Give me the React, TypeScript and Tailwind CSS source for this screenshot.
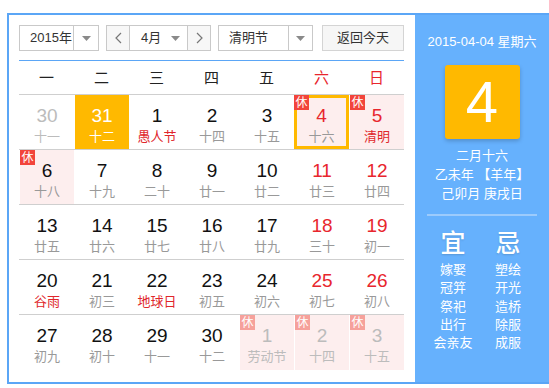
import React from "react";

type Cell = {
  d: number;
  l: string;
  other?: boolean;
  red?: boolean;
  lred?: boolean;
  rest?: boolean;
  sel?: boolean;
  today?: boolean;
};

const ROWS: Cell[][] = [
  [
    { d: 30, l: "十一", other: true },
    { d: 31, l: "十二", sel: true },
    { d: 1, l: "愚人节", lred: true },
    { d: 2, l: "十四" },
    { d: 3, l: "十五" },
    { d: 4, l: "十六", red: true, rest: true, today: true },
    { d: 5, l: "清明", red: true, lred: true, rest: true },
  ],
  [
    { d: 6, l: "十八", rest: true },
    { d: 7, l: "十九" },
    { d: 8, l: "二十" },
    { d: 9, l: "廿一" },
    { d: 10, l: "廿二" },
    { d: 11, l: "廿三", red: true },
    { d: 12, l: "廿四", red: true },
  ],
  [
    { d: 13, l: "廿五" },
    { d: 14, l: "廿六" },
    { d: 15, l: "廿七" },
    { d: 16, l: "廿八" },
    { d: 17, l: "廿九" },
    { d: 18, l: "三十", red: true },
    { d: 19, l: "初一", red: true },
  ],
  [
    { d: 20, l: "谷雨", lred: true },
    { d: 21, l: "初三" },
    { d: 22, l: "地球日", lred: true },
    { d: 23, l: "初五" },
    { d: 24, l: "初六" },
    { d: 25, l: "初七", red: true },
    { d: 26, l: "初八", red: true },
  ],
  [
    { d: 27, l: "初九" },
    { d: 28, l: "初十" },
    { d: 29, l: "十一" },
    { d: 30, l: "十二" },
    { d: 1, l: "劳动节", other: true, rest: true },
    { d: 2, l: "十四", other: true, rest: true },
    { d: 3, l: "十五", other: true, rest: true },
  ],
];

const WEEK = ["一", "二", "三", "四", "五", "六", "日"];
const YI = ["嫁娶", "冠笄", "祭祀", "出行", "会亲友"];
const JI = ["塑绘", "开光", "造桥", "除服", "成服"];

const FONT = "font-['Liberation_Sans','Noto_Sans_CJK_SC',sans-serif]";

function Caret() {
  return (
    <svg width="9" height="5" viewBox="0 0 9 5">
      <path d="M0 0h9L4.5 5z" fill="#8a8a8a" />
    </svg>
  );
}

function Chevron({ right }: { right?: boolean }) {
  return (
    <svg width="7" height="12" viewBox="0 0 7 12">
      <polyline
        points={right ? "1,1 6,6 1,11" : "6,1 1,6 6,11"}
        fill="none"
        stroke="#777"
        strokeWidth="1.2"
      />
    </svg>
  );
}

function DayCell({ c }: { c: Cell }) {
  let bg = "bg-white";
  if (c.sel) bg = "bg-[#ffb900]";
  else if (c.rest) bg = "bg-[#fdeeee]";

  let num = "text-[#111]";
  if (c.sel) num = "text-white";
  else if (c.other) num = "text-[#bcbcbc]";
  else if (c.red) num = "text-[#e8262d]";

  let lun = "text-[#999]";
  if (c.sel) lun = "text-white";
  else if (c.other) lun = "text-[#bcbcbc]";
  else if (c.lred) lun = "text-[#e0262b]";

  const frame = c.today
    ? "border-[3px] border-[#ffb900] pt-[7px]"
    : "border-l border-l-white pt-[10px]";

  return (
    <div className={`relative flex h-full flex-col items-center ${bg} ${frame}`}>
      {c.rest && (
        <span
          className={`absolute flex h-[15px] w-[15px] items-center justify-center text-[12px] leading-none text-white ${
            c.other ? "bg-[#f6a19b]" : "bg-[#f2443b]"
          } ${c.today ? "-left-[3px] -top-[3px]" : "left-0 top-0"}`}
        >
          休
        </span>
      )}
      <span className={`text-[19px] leading-[22px] ${num}`}>{c.d}</span>
      <span className={`mt-[1px] text-[13px] leading-[17px] ${lun}`}>{c.l}</span>
    </div>
  );
}

export default function App() {
  return (
    <div className={`h-[388px] w-[549px] overflow-hidden bg-white ${FONT}`}>
      <div className="ml-[7px] mt-[13px] flex h-[371px] w-[560px] border-2 border-[#5ba6f6]">
        {/* left: month grid */}
        <div className="w-[406px] shrink-0 bg-white pl-[10px] pt-[10px]">
          <div className="flex h-[26px] items-stretch text-[13px] text-[#333]">
            <div className="flex w-[80px] border border-[#c9c9c9]">
              <div className="flex flex-1 items-center pl-[10px]">2015年</div>
              <div className="flex w-[25px] items-center justify-center border-l border-[#c9c9c9]">
                <Caret />
              </div>
            </div>
            <div className="ml-[7px] flex w-[105px] border border-[#c9c9c9]">
              <div className="flex w-[22px] items-center justify-center bg-[#f7f7f7]">
                <Chevron />
              </div>
              <div className="flex flex-1 items-center justify-between border-x border-[#c9c9c9] pl-[11px] pr-[7px]">
                <span>4月</span>
                <Caret />
              </div>
              <div className="flex w-[22px] items-center justify-center bg-[#f7f7f7]">
                <Chevron right />
              </div>
            </div>
            <div className="ml-[7px] flex w-[95px] border border-[#c9c9c9]">
              <div className="flex flex-1 items-center pl-[10px]">清明节</div>
              <div className="flex w-[24px] items-center justify-center border-l border-[#c9c9c9]">
                <Caret />
              </div>
            </div>
            <div className="ml-[9px] flex w-[82px] items-center justify-center border border-[#d4d4d4] bg-[#f6f6f6]">
              返回今天
            </div>
          </div>

          <div className="mt-[9px] w-[385px] border-t border-[#5ba6f6]">
            <div className="grid h-[34px] grid-cols-7 border-b border-[#cfcfcf] pt-[2px] text-[15px]">
              {WEEK.map((w, i) => (
                <div
                  key={w}
                  className={`flex items-center justify-center ${i >= 5 ? "text-[#e8262d]" : "text-[#222]"}`}
                >
                  {w}
                </div>
              ))}
            </div>
            {ROWS.map((row, ri) => (
              <div
                key={ri}
                className={`grid h-[55px] grid-cols-7 ${ri < ROWS.length - 1 ? "border-b border-[#cfcfcf]" : ""}`}
              >
                {row.map((c, ci) => (
                  <DayCell key={ci} c={c} />
                ))}
              </div>
            ))}
          </div>
        </div>

        {/* right: day detail */}
        <div className="flex w-[134px] shrink-0 flex-col items-center bg-[#66b1fd] pt-[18px] text-white">
          <div className="text-[13px] leading-[18px]">2015-04-04 星期六</div>
          <div className="mt-[14px] flex h-[74px] w-[75px] items-center justify-center rounded-[3px] bg-[#ffb900] text-[58px] leading-none shadow-[0_2px_4px_rgba(0,0,0,0.2)]">
            4
          </div>
          <div className="mt-[7px] flex flex-col items-center text-[13px] leading-[19px]">
            <span>二月十六</span>
            <span>乙未年 【羊年】</span>
            <span>己卯月 庚戌日</span>
          </div>
          <div className="mt-[11px] h-[2px] w-[110px] bg-[#9ccbfc]" />
          <div className="mt-[13px] flex w-full justify-center gap-[10px] pr-[3px]">
            {[
              ["宜", YI],
              ["忌", JI],
            ].map(([h, items]) => (
              <div key={h as string} className="flex w-[45px] flex-col items-center">
                <span className="text-[25px] font-medium leading-[28px] [text-shadow:0_1px_2px_rgba(0,0,0,0.15)]">
                  {h as string}
                </span>
                <div className="mt-[4px] flex flex-col items-center text-[13px] leading-[18.3px]">
                  {(items as string[]).map((t) => (
                    <span key={t}>{t}</span>
                  ))}
                </div>
              </div>
            ))}
          </div>
        </div>
      </div>
    </div>
  );
}
